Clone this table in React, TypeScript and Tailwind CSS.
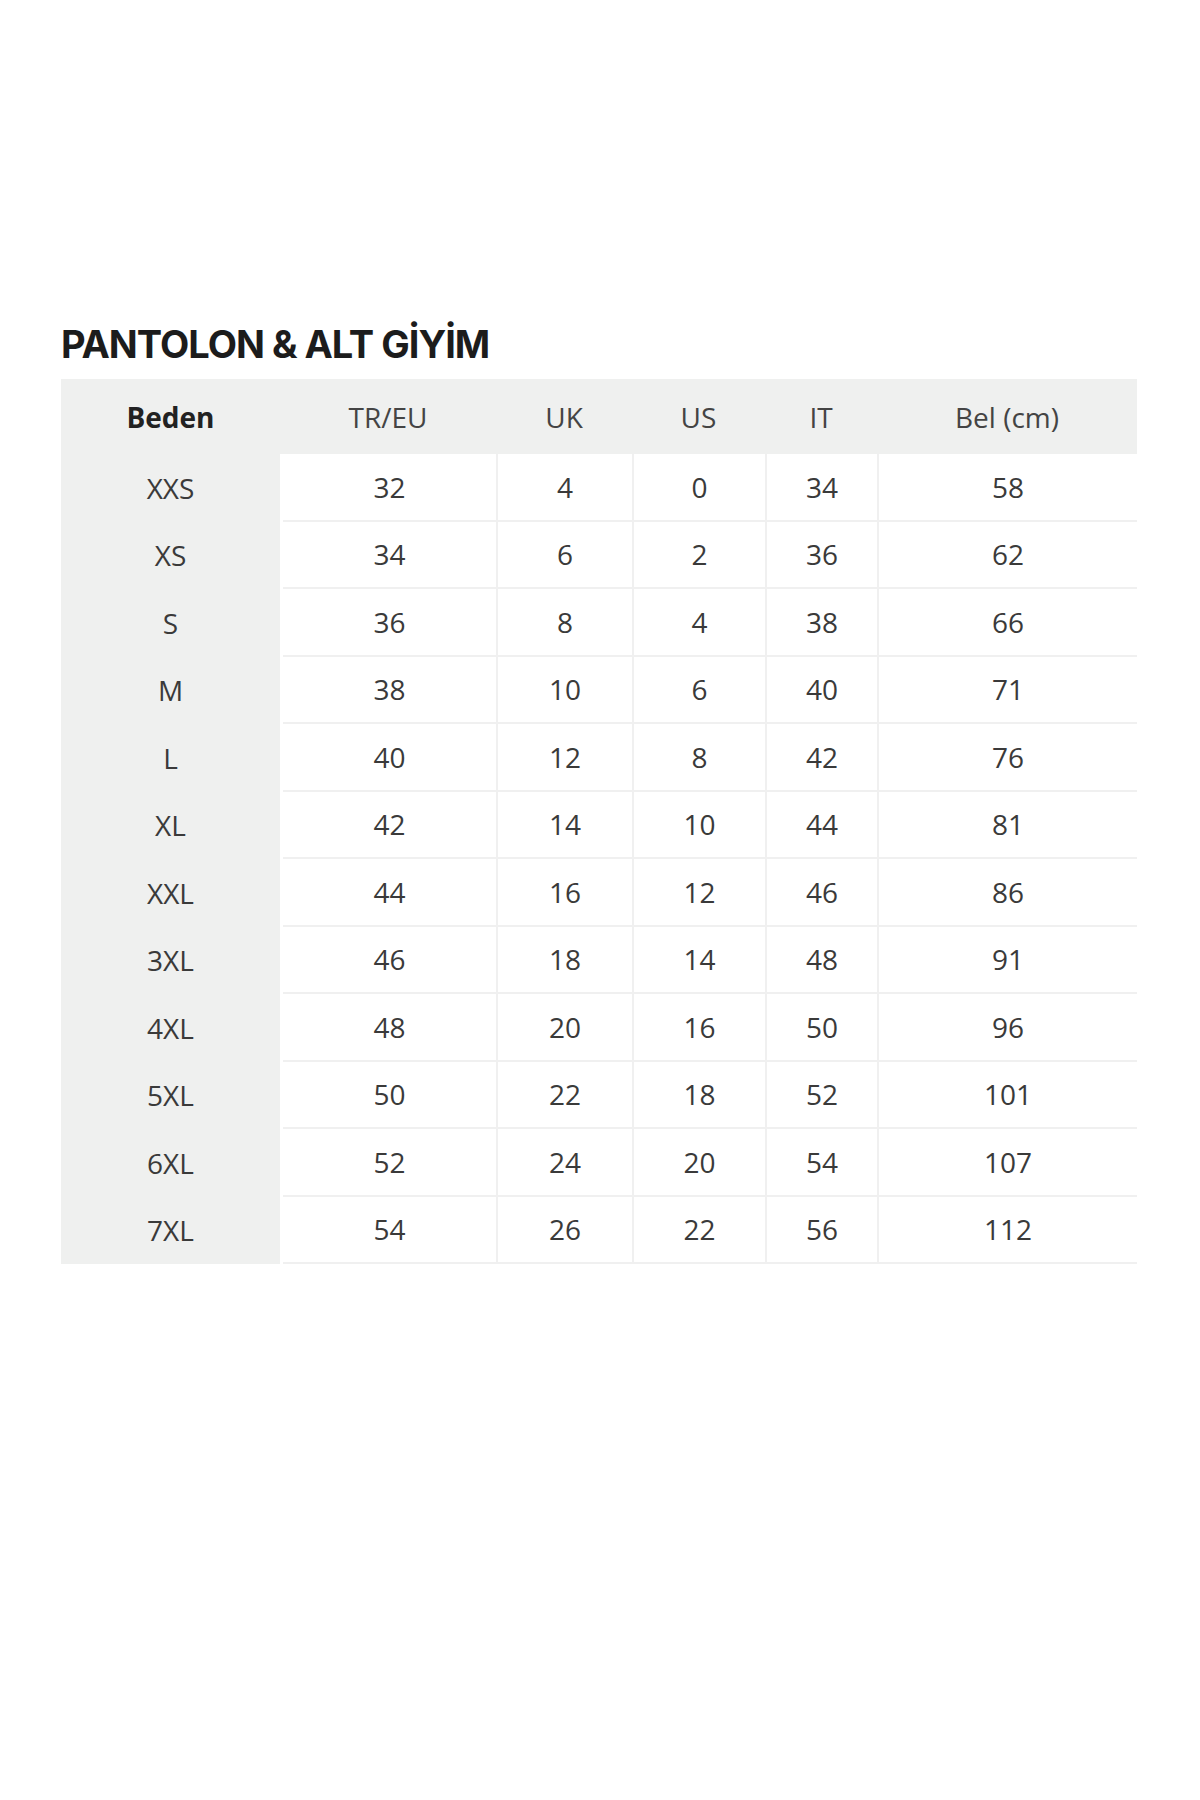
const headers = ['Beden', 'TR/EU', 'UK', 'US', 'IT', 'Bel (cm)'];

const rows: string[][] = [
  ['XXS', '32', '4', '0', '34', '58'],
  ['XS', '34', '6', '2', '36', '62'],
  ['S', '36', '8', '4', '38', '66'],
  ['M', '38', '10', '6', '40', '71'],
  ['L', '40', '12', '8', '42', '76'],
  ['XL', '42', '14', '10', '44', '81'],
  ['XXL', '44', '16', '12', '46', '86'],
  ['3XL', '46', '18', '14', '48', '91'],
  ['4XL', '48', '20', '16', '50', '96'],
  ['5XL', '50', '22', '18', '52', '101'],
  ['6XL', '52', '24', '20', '54', '107'],
  ['7XL', '54', '26', '22', '56', '112'],
];

const gridCols = 'grid grid-cols-[219px_216px_136px_133px_112px_260px]';

export default function App() {
  return (
    <div className="min-h-[1800px] w-[1200px] bg-white pl-[61px] pt-[322px] font-['Open_Sans',sans-serif] text-[#3a3a3a]">
      <h1 className="font-['Inter',sans-serif] text-[38px] font-bold leading-[44px] tracking-[-1px] text-[#1c1c1c]">
        PANTOLON &amp; ALT GİYİM
      </h1>

      <div className="mt-[13px] w-[1076px]">
        {/* başlık satırı */}
        <div className={`${gridCols} h-[75px] bg-[#eff0ef]`}>
          {headers.map((h, i) => (
            <div
              key={h}
              className={`flex items-center justify-center text-[28px] ${
                i === 0 ? 'font-bold text-[#222]' : 'text-[#444]'
              }`}
            >
              {h}
            </div>
          ))}
        </div>

        {rows.map((row) => (
          <div key={row[0]} className={`${gridCols} h-[67.5px]`}>
            {row.map((cell, i) => (
              <div
                key={i}
                className={`flex items-center justify-center text-[28px] ${
                  i === 0
                    ? 'bg-[#eff0ef]'
                    : `border-b-2 border-[#f0f0f0] bg-white ${i > 1 ? 'border-l-2 border-l-[#f0f0f0]' : 'ml-[3px]'}`
                }`}
              >
                {cell}
              </div>
            ))}
          </div>
        ))}
      </div>
    </div>
  );
}
